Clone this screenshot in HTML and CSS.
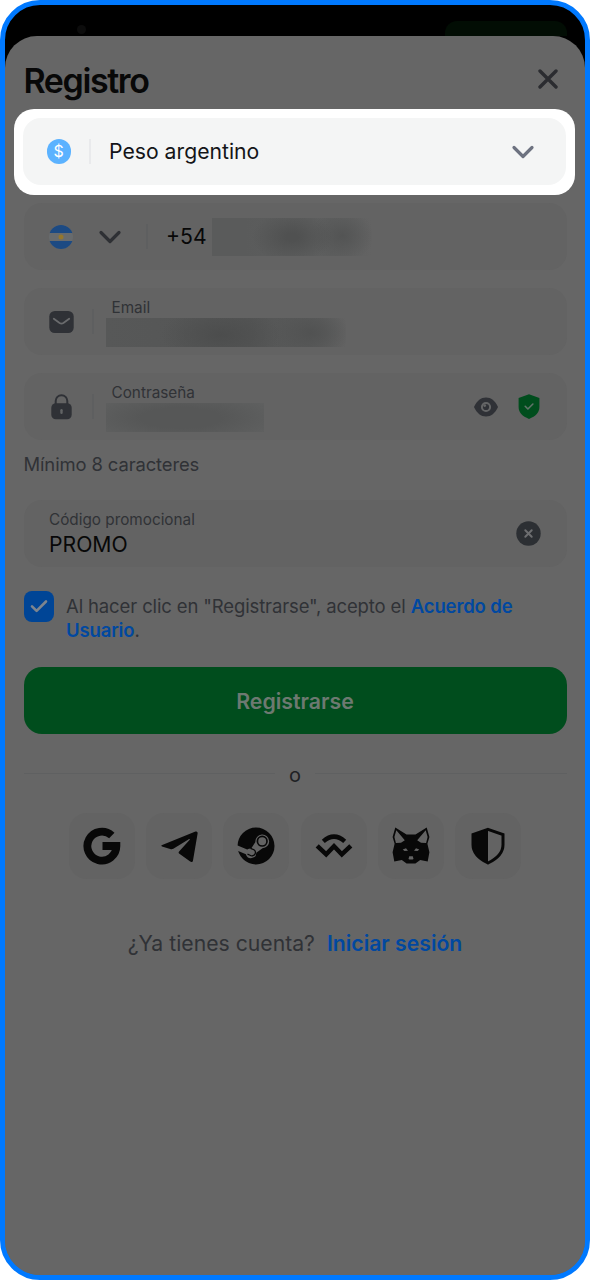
FILE: index.html
```html
<!DOCTYPE html>
<html lang="es">
<head>
<meta charset="utf-8">
<title>Registro</title>
<link rel="stylesheet" href="styles.css">
</head>
<body>
<div class="frame">
  <div class="topbar"><span class="dot"></span><span class="pill"></span></div>
  <main class="sheet">
    <header class="head">
      <h1>Registro</h1>
      <svg class="close" width="20" height="20" viewBox="0 0 20 20"><path d="M2 2 18 18M18 2 2 18"/></svg>
    </header>

    <div class="spotlight">
      <div class="currency">
        <span class="coin">$</span>
        <i class="sep"></i>
        <span class="value">Peso argentino</span>
        <svg class="chev" width="24" height="14" viewBox="0 0 24 14"><path d="M3 2.5 12 11.5 21 2.5"/></svg>
      </div>
    </div>

    <div class="field phone">
      <svg width="24" height="24" viewBox="0 0 24 24"><defs><clipPath id="c"><circle cx="12" cy="12" r="12"/></clipPath></defs><g clip-path="url(#c)"><path fill="#686b6d" d="M0 0h24v24H0z"/><path fill="#1c4a83" d="M0 0h24v8H0zM0 16h24v8H0z"/><circle cx="12" cy="12" r="2.5" fill="#94772d"/></g></svg>
      <svg class="chev dim" width="24" height="14" viewBox="0 0 24 14"><path d="M3 2.5 12 11.5 21 2.5"/></svg>
      <i class="sep"></i>
      <span class="value">+54</span>
      <span class="mask mask-phone"></span>
    </div>

    <div class="field">
      <svg width="25" height="24" viewBox="0 0 25 24"><rect x=".3" y="1" width="24.400" height="22" rx="5.500" fill="#2f3136"/><path d="M4.800 8.800 10.600 13q1.900 1.300 3.800 0L20.200 8.800" fill="none" stroke="#6a6b6d" stroke-width="1.800" stroke-linecap="round"/></svg>
      <i class="sep"></i>
      <div class="stack"><label>Email</label><span class="mask mask-email"></span></div>
    </div>

    <div class="field">
      <svg width="25" height="26" viewBox="0 0 25 26"><path d="M6.700 10V7a5.800 5.800 0 0 1 11.600 0V10" fill="none" stroke="#2f3136" stroke-width="2"/><rect x="2.300" y="9.300" width="20.400" height="16" rx="4.500" fill="#2f3136"/><rect x="11.300" y="15" width="2.400" height="5" rx="1.200" fill="#626465"/></svg>
      <i class="sep"></i>
      <div class="stack"><label>Contraseña</label><span class="mask mask-pass"></span></div>
      <svg class="eye" width="24" height="20" viewBox="0 0 24 20"><path fill="#2f3136" d="M0 10C3 3.500 7 .5 12 .5S21 3.500 24 10c-3 6.500-7 9.500-12 9.500S3 16.500 0 10Z"/><circle cx="12" cy="10" r="4.100" fill="#2f3136" stroke="#646566" stroke-width="2"/><circle cx="10.700" cy="8.600" r="1.400" fill="#646566"/></svg>
      <svg width="22" height="25" viewBox="0 0 22 25"><path fill="#004d1d" d="M11 .2 21.400 4v9c0 5.500-3.600 9.200-10.400 11.900C4.200 22.200.6 18.500.6 13V4Z"/><path d="m7.200 12.300 2.700 2.700 5-5" fill="none" stroke="#60736a" stroke-width="1.600" stroke-linecap="round" stroke-linejoin="round"/></svg>
    </div>

    <p class="hint">Mínimo 8 caracteres</p>

    <div class="field promo">
      <div class="stack"><label>Código promocional</label><span class="value">PROMO</span></div>
      <svg width="25" height="25" viewBox="0 0 25 25"><circle cx="12.500" cy="12.500" r="12.200" fill="#2c2f33"/><path d="m9.300 9.300 6.400 6.400m0-6.400-6.400 6.400" stroke="#6d6e70" stroke-width="2" stroke-linecap="round"/></svg>
    </div>

    <div class="terms">
      <span class="check"><svg width="18" height="14" viewBox="0 0 18 14"><path d="m2 7.300 4.600 4.600L16 2.500"/></svg></span>
      <p>Al hacer clic en "Registrarse", acepto el <a>Acuerdo de<br>Usuario</a>.</p>
    </div>

    <button class="submit">Registrarse</button>

    <div class="or"><span>o</span></div>

    <div class="social">
      <span><svg width="38" height="38" viewBox="0 0 38 38"><path fill="none" stroke="#080808" stroke-width="7.800" d="M28.800 8.500A14.500 14.500 0 1 0 33.400 19H19.500"/></svg></span>
      <span><svg width="38" height="38" viewBox="0 0 38 38"><path fill="#080808" d="M2.200 18.100 35.500 4.600c1.400-.5 2.300.3 2.100 1.800L33 33.400c-.3 1.700-1.500 2-2.800 1.200L19.400 26.700c-1-.8-1-1.600-.1-2.500L29.500 13c.8-1-.1-1.300-1.100-.6L13.300 21.800c-1.100.6-2 .6-3.100.2L2 19.500c-.9-.3-.9-1 .2-1.400Z"/></svg></span>
      <span><svg width="38" height="38" viewBox="0 0 38 38"><circle cx="19" cy="19" r="18.500" fill="#080808"/><path fill="#636363" d="M0 18.300 10.200 22.500q1.700-1.200 4-1.100L18.400 15A6.900 6.900 0 1 1 25.500 21.300L19.300 25.800A5.300 5.300 0 0 1 8.900 27.300L0 23.500Z"/><circle cx="25.200" cy="14.200" r="4.800" fill="#636363" stroke="#080808" stroke-width="1.700"/><path d="m10.500 27.200 2.500 1a3.400 3.400 0 1 0 2.500-6.100l-2-.8" fill="none" stroke="#080808" stroke-width="1.300"/></svg></span>
      <span><svg width="38" height="38" viewBox="0 0 38 38"><g fill="none" stroke="#080808" stroke-width="4.500"><path d="M8.300 14.400q10.700-9.500 21.400 0"/><path d="m2.200 18.800 9 8.500 7.800-8 7.800 8 9-8.500"/></g></svg></span>
      <span><svg width="38" height="38" viewBox="0 0 38 38"><path fill="#080808" d="m3.300.6 11.200 6.900h9L34.700.6 37.400 10l-2 6.700 2 8.500-1.700 9.400-7.500-1.600-4.800 3.500h-8.800l-4.800-3.500-7.500 1.600L.6 25.200l2-8.500-2-6.700Z"/><path fill="#636363" d="m4.300 3.300 8.500 9.900-3.800 2.600-5.100.1-1.500-5.800Zm29.400 0-8.500 9.900 3.800 2.600 5.100.1 1.500-5.800ZM10.700 22.400l3.300-1.200 2 2.600-3.500.1Zm16.600 0L24 21.200l-2 2.600 3.500.1ZM17.200 29.300h3.600l.7 2.600-.9.700h-3.200l-.9-.7Z"/></svg></span>
      <span><svg width="38" height="38" viewBox="0 0 38 38"><path fill="none" stroke="#080808" stroke-width="3" d="M19 2.300 34 7.500v10.200c0 8.500-5.500 13.700-15 18.300C9.500 31.400 4 26.200 4 17.700V7.500Z"/><path fill="#080808" d="M19 2.300V36C9.500 31.400 4 26.200 4 17.700V7.500Z"/></svg></span>
    </div>

    <p class="login">¿Ya tienes cuenta?<a>Iniciar sesión</a></p>
  </main>
</div>
</body>
</html>
```
FILE: styles.css
```css
* { box-sizing: border-box; }
body { margin: 0; background: #fff; font-family: Inter, "Liberation Sans", sans-serif; color: #080808; }
h1, p { margin: 0; }
svg { display: block; flex: none; }
.frame { height: 1280px; border: 5px solid #0079ff; border-radius: 40px; background: linear-gradient(#000 50%, #666 50%); overflow: hidden; display: flex; flex-direction: column; }
.topbar { height: 31px; flex: none; display: flex; justify-content: space-between; padding: 16px 18px 0 72px; }
.dot { width: 9px; height: 9px; margin-top: 4px; border-radius: 50%; background: #0c0c0c; }
.pill { width: 122px; height: 15px; border-radius: 12px 12px 0 0; background: #020d04; }
.sheet { flex: 1; background: #666; border-radius: 32px 32px 0 0; padding: 0 18.500px; display: flex; flex-direction: column; }
.head { height: 73px; display: flex; align-items: center; justify-content: space-between; padding: 12px 8.500px 0 0; }
.head h1 { font-size: 34px; font-weight: 600; letter-spacing: -1.400px; line-height: 40px; padding-top: 4px; }
.close path { fill: none; stroke: #2b2c30; stroke-width: 3.400; stroke-linecap: round; }
.spotlight { height: 86px; margin: 0 -8.500px 8px -9.500px; padding: 9px 9.500px 9px 8.500px; background: #fff; border-radius: 20px; flex: none; }
.currency { height: 67px; display: flex; align-items: center; border-radius: 18px; background: #f4f5f5; padding: 0 30.500px 0 24px; }
.currency .sep { margin: 0 18.500px 0 18px; background: #e9eaec; }
.currency .value { flex: 1; color: #141518; }
.coin { width: 24.500px; height: 24.500px; border-radius: 50%; background: #5bb2ff; color: #fff; font-size: 16px; line-height: 24.500px; text-align: center; }
.sep { width: 1.500px; height: 25px; background: #5e5f60; flex: none; }
.value { font-size: 21.200px; line-height: 27px; }
.chev path { fill: none; stroke: #6d7280; stroke-width: 3.200; stroke-linecap: round; stroke-linejoin: round; }
.chev.dim path { stroke: #2e3034; }
.field { height: 67px; flex: none; display: flex; align-items: center; margin-bottom: 18px; padding: 0 27px 0 25.500px; border-radius: 18px; background: #636363; }
.field .sep { margin: 0 12.500px 0 18px; }
.phone .chev { margin-left: 25px; }
.phone .sep { margin: 0 18.500px 0 24px; }
.stack { flex: 1; display: flex; flex-direction: column; }
.stack label { font-size: 15.300px; line-height: 20px; color: #303236; padding: 1px 0 0 5.500px; }
.mask { display: block; height: 29px; }
.mask-phone { width: 160px; height: 38px; margin-left: 5px; background: radial-gradient(ellipse 40px 26px at 80px 19px, #505151 15%, transparent), radial-gradient(ellipse 32px 26px at 130px 18px, #535454, transparent), linear-gradient(90deg, #5a5b5b 20%, #5e5f5f 75%, #636363); }
.mask-email { width: 240px; background: radial-gradient(ellipse 60px 28px at 115px 17px, #4c4d4d, transparent), radial-gradient(ellipse 40px 26px at 205px 15px, #515252, transparent), linear-gradient(90deg, #575858, #545555 60%, #5a5b5b 85%, #636363); }
.mask-pass { width: 158px; background: radial-gradient(ellipse 100px 26px at 75px 15px, #565757 40%, transparent), #5f6060; }
.eye { margin-right: 20px; }
.hint { height: 42px; margin: -12px 0 12px; padding-top: 6px; font-size: 18.400px; line-height: 24px; color: #303236; flex: none; letter-spacing: -.1px; }
.promo { padding-right: 26px; margin-bottom: 24px; }
.promo label { padding: 0; line-height: 21px; }
.promo .value { line-height: 28px; }
.terms { display: flex; height: 52px; margin-bottom: 24px; flex: none; font-size: 18.500px; line-height: 24.500px; color: #303236; }
.terms p { padding: 2.500px 0 0 12px; white-space: nowrap; letter-spacing: -.13px; }
a { color: #0048a0; font-weight: 600; }
.check { width: 30.500px; height: 30.500px; border-radius: 8px; background: #004596; display: flex; align-items: center; justify-content: center; flex: none; }
.check path { fill: none; stroke: #7d858e; stroke-width: 2.600; stroke-linecap: round; stroke-linejoin: round; }
.submit { height: 67px; flex: none; border: 0; border-radius: 18px; background: #004d1d; color: #6d7971; font: 600 21.300px Inter, "Liberation Sans", sans-serif; }
.or { height: 79px; flex: none; display: flex; align-items: center; gap: 14px; font-size: 20px; color: #202124; }
.or::before, .or::after { content: ""; flex: 1; height: 1px; background: #5f6061; }
.or span { padding-top: 2px; }
.social { display: flex; justify-content: center; gap: 11.300px; height: 66px; flex: none; }
.social span { width: 66px; border-radius: 18px; background: #636363; display: flex; align-items: center; justify-content: center; }
.login { display: flex; justify-content: center; gap: 12px; padding-top: 50px; font-size: 21.200px; line-height: 28px; color: #303236; }
```
